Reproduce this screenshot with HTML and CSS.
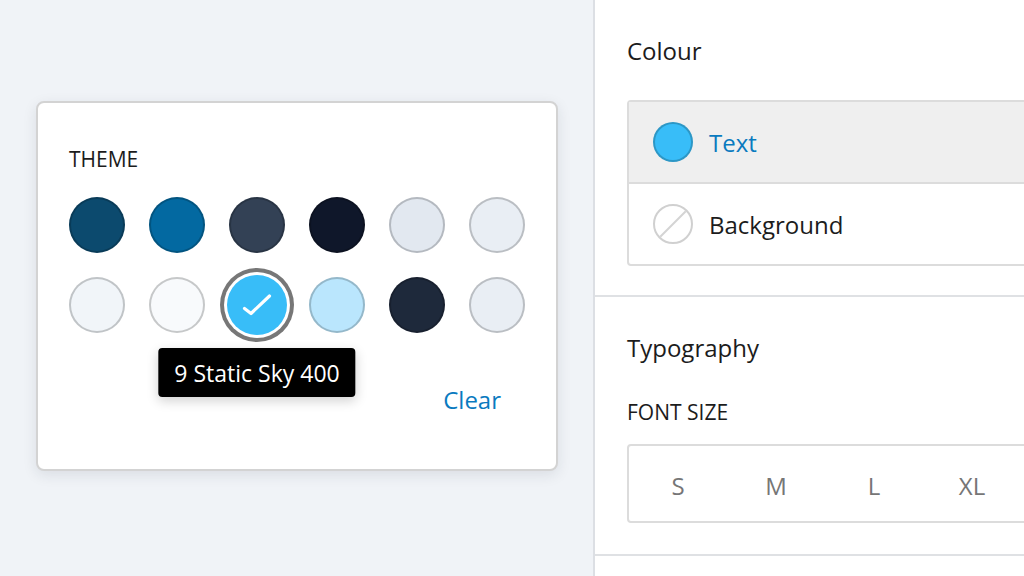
FILE: index.html
```html
<!DOCTYPE html>
<html lang="en">
<head>
<meta charset="utf-8">
<title>Colour picker</title>
<link rel="stylesheet" href="styles.css">
</head>
<body>
<div class="page">
  <main class="canvas">
    <div class="card">
      <div class="label">THEME</div>
      <div class="swatches">
        <span class="swatch" style="background:#0c4a6e"></span>
        <span class="swatch" style="background:#0369a1"></span>
        <span class="swatch" style="background:#334155"></span>
        <span class="swatch" style="background:#0f172a"></span>
        <span class="swatch" style="background:#e2e8f0"></span>
        <span class="swatch" style="background:#e9eef4"></span>
        <span class="swatch" style="background:#f1f5f9"></span>
        <span class="swatch" style="background:#f8fafc"></span>
        <span class="cell">
          <span class="swatch selected" style="background:#38bdf8">
            <svg class="check" viewBox="0 0 60 60" width="60" height="60"><polyline points="17.5,33.5 24,38.5 42.5,21" fill="none" stroke="#fff" stroke-width="3.2" stroke-linecap="round" stroke-linejoin="round"/></svg>
          </span>
          <span class="tooltip">9 Static Sky 400</span>
        </span>
        <span class="swatch" style="background:#bae6fd"></span>
        <span class="swatch" style="background:#1e293b"></span>
        <span class="swatch" style="background:#e9eef4"></span>
      </div>
      <div class="actions">
        <button class="clear" type="button">Clear</button>
      </div>
    </div>
  </main>
  <aside class="panel">
    <section class="section">
      <h2 class="heading">Colour</h2>
      <div class="list">
        <div class="row active">
          <span class="dot dot-sky"></span>
          <span class="row-label">Text</span>
        </div>
        <div class="row">
          <span class="dot dot-none">
            <svg viewBox="0 0 40 40" width="40" height="40"><line x1="7" y1="33" x2="33" y2="7" stroke="#d4d4d4" stroke-width="2"/></svg>
          </span>
          <span class="row-label">Background</span>
        </div>
      </div>
    </section>
    <section class="section">
      <h2 class="heading">Typography</h2>
      <div class="label label-gap">FONT SIZE</div>
      <div class="sizes">
        <button class="size" type="button">S</button>
        <button class="size" type="button">M</button>
        <button class="size" type="button">L</button>
        <button class="size" type="button">XL</button>
      </div>
    </section>
  </aside>
</div>
</body>
</html>
```

FILE: styles.css
```css
* { box-sizing: border-box; }
html, body {
  margin: 0;
  padding: 0;
  width: 1024px;
  height: 576px;
  overflow: hidden;
  font-family: "Open Sans", "Noto Sans", sans-serif;
  color: #1c1c1c;
  background: #f0f3f7;
}
.page {
  display: flex;
  width: 1024px;
  height: 576px;
  overflow: hidden;
}
.canvas {
  flex: 0 0 593px;
  padding: 101px 0 0 36px;
}
.card {
  position: relative;
  width: 522px;
  background: #fff;
  border: 2px solid #d3d3d3;
  border-radius: 8px;
  box-shadow: 0 4px 14px rgba(30, 40, 60, 0.10);
  padding: 42px 31px 53px 31px;
}
.label {
  font-size: 21px;
  line-height: 28px;
  color: #1c1c1c;
}
.swatches {
  display: grid;
  grid-template-columns: repeat(6, 56px);
  grid-auto-rows: 56px;
  gap: 24px;
  margin-top: 24px;
}
.swatch {
  display: block;
  width: 56px;
  height: 56px;
  border-radius: 50%;
  border: 2px solid rgba(0, 0, 0, 0.2);
}
.cell {
  position: relative;
  display: block;
  width: 56px;
  height: 56px;
}
.swatch.selected {
  position: relative;
  width: 60px;
  height: 60px;
  margin: -2px;
  border: none;
  box-shadow: 0 0 0 3px #fff, 0 0 0 7px #777;
}
.check { display: block; }
.tooltip {
  position: absolute;
  top: 71px;
  left: 50%;
  transform: translateX(-50%);
  height: 49px;
  padding: 2px 16px 0 16px;
  background: #000;
  color: #fff;
  border-radius: 4px;
  font-size: 23px;
  line-height: 47px;
  white-space: nowrap;
  box-shadow: 0 4px 12px rgba(0, 0, 0, 0.18);
  z-index: 2;
}
.actions {
  display: flex;
  justify-content: flex-end;
  margin-top: 51px;
}
.clear {
  font-family: inherit;
  font-size: 24px;
  line-height: 32px;
  color: #0a7abf;
  background: none;
  border: none;
  padding: 0 24px;
  margin: 0;
}
.panel {
  flex: 0 0 540px;
  background: #fff;
  border-left: 2px solid #dcdfe4;
}
.section {
  padding: 35px 32px 29px 32px;
  border-bottom: 2px solid #dfe1e4;
}
.section + .section {
  padding-bottom: 31px;
}
.heading {
  margin: 0 0 33px 0;
  font-size: 24px;
  line-height: 32px;
  font-weight: 400;
  color: #1c1c1c;
}
.section + .section .heading { margin-bottom: 34px; }
.list {
  width: 470px;
  border: 2px solid #dcdcdc;
  border-radius: 4px;
}
.row {
  display: flex;
  align-items: center;
  gap: 16px;
  height: 80px;
  padding-left: 24px;
}
.row + .row { border-top: 2px solid #dcdcdc; height: 82px; }
.row.active { background: #efefef; }
.row-label {
  font-size: 24px;
  color: #1c1c1c;
}
.row.active .row-label { color: #0a7abf; }
.dot {
  display: block;
  width: 40px;
  height: 40px;
  border-radius: 50%;
}
.dot-sky {
  background: #38bdf8;
  border: 2px solid rgba(0, 0, 0, 0.2);
}
.dot-none {
  background: #fff;
  border: 2px solid #d0d0d0;
  overflow: hidden;
}
.dot-none svg { display: block; margin: -2px; }
.label-gap { margin-bottom: 18px; }
.sizes {
  display: flex;
  width: 494px;
  height: 79px;
  border: 2px solid #dcdcdc;
  border-radius: 4px;
}
.size {
  flex: 0 0 98px;
  font-family: inherit;
  font-size: 24px;
  color: #767676;
  background: none;
  border: none;
  padding: 4px 0 0 0;
  margin: 0;
}
```
